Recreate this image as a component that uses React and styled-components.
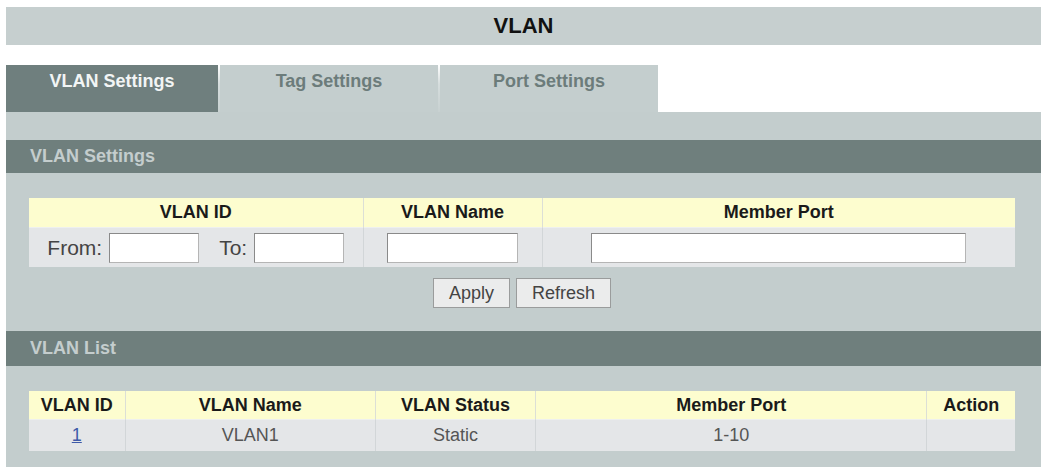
import React from "react";
import styled, { createGlobalStyle } from "styled-components";

const Global = createGlobalStyle`
  html, body { margin: 0; padding: 0; background: #ffffff; }
  body { font-family: "Liberation Sans", Arial, sans-serif; }
`;

const Page = styled.div`
  padding: 7px 5px 0 6px;
  width: 1046px;
  box-sizing: border-box;
`;

const TitleBar = styled.div`
  height: 38px;
  background: #c6cfcf;
  display: flex;
  align-items: center;
  justify-content: center;
  font-size: 22px;
  font-weight: bold;
  color: #111;
`;

const TabRow = styled.div`
  margin-top: 20px;
  display: flex;
  gap: 2px;
  height: 47px;
`;

const TabSlot = styled.div`
  display: flex;
  gap: 2px;
  background: linear-gradient(#ffffff, #d6dddd 40%, #c8d1d1);
`;

const Tab = styled.div`
  width: ${(p) => p.$w}px;
  background: ${(p) => (p.$active ? "#6f7f7e" : "#c4cece")};
  color: ${(p) => (p.$active ? "#f2f5f5" : "#6c7c7b")};
  font-size: 18px;
  font-weight: bold;
  text-align: center;
  padding-top: 6px;
  box-sizing: border-box;
  line-height: 20px;
`;

const Panel = styled.div`
  background: #c3cdcd;
  padding: 28px 0 20px;
`;

const SectionHeader = styled.div`
  height: ${(p) => p.$h}px;
  background: #6f7f7d;
  color: #c4cdcd;
  font-size: 18px;
  font-weight: bold;
  padding-left: 24px;
  display: flex;
  align-items: center;
`;

const TableWrap = styled.div`
  margin: 25px 26px 0 23px;
`;

const Table = styled.table`
  width: 100%;
  border-collapse: collapse;
  table-layout: fixed;
`;

const Th = styled.th`
  background: #fdfdcf;
  color: #1a1a1a;
  font-size: 18px;
  font-weight: bold;
  height: ${(p) => p.$h}px;
  padding: 0;
  text-align: center;
  border-left: 1px solid #dcdfd6;
  &:first-child { border-left: none; }
`;

const Td = styled.td`
  background: #e4e6e8;
  color: #555;
  font-size: 18px;
  height: ${(p) => p.$h}px;
  padding: 0;
  text-align: center;
  border-left: 1px solid #d2d6d8;
  border-top: 1px solid #eef0ef;
  &:first-child { border-left: none; }
`;

const FieldGroup = styled.div`
  display: flex;
  align-items: center;
  justify-content: center;
`;

const Label = styled.span`
  font-size: 21px;
  color: #444;
  margin-right: 7px;
  margin-left: ${(p) => p.$ml || 0}px;
`;

const Input = styled.input`
  width: ${(p) => p.$w}px;
  height: 30px;
  box-sizing: border-box;
  border: 1px solid #8a8a8a;
  border-right-color: #b5b5b5;
  border-bottom-color: #b5b5b5;
  background: #fff;
  margin: 0;
  padding: 0;
  display: block;
`;

const ButtonRow = styled.div`
  margin: 11px 26px 23px 23px;
  display: flex;
  justify-content: center;
  gap: 6px;
`;

const Button = styled.button`
  width: ${(p) => p.$w}px;
  height: 30px;
  font-family: "Liberation Sans", Arial, sans-serif;
  font-size: 18px;
  color: #444;
  background: #ebecec;
  border: 1px solid #9a9c9c;
  padding: 0;
`;

const Link = styled.a`
  color: #3d5aa8;
  text-decoration: underline;
`;

const Bottom = styled.div`
  height: 18px;
`;

export default function App() {
  return (
    <>
      <Global />
      <Page>
        <TitleBar>VLAN</TitleBar>
        <TabRow>
          <TabSlot>
            <Tab $w={212} $active>VLAN Settings</Tab>
            <Tab $w={218}>Tag Settings</Tab>
            <Tab $w={218}>Port Settings</Tab>
          </TabSlot>
        </TabRow>
        <Panel>
          <SectionHeader $h={33}>VLAN Settings</SectionHeader>
          <TableWrap>
            <Table>
              <colgroup>
                <col style={{ width: 334 }} />
                <col style={{ width: 179 }} />
                <col style={{ width: 473 }} />
              </colgroup>
              <thead>
                <tr>
                  <Th $h={29}>VLAN ID</Th>
                  <Th $h={29}>VLAN Name</Th>
                  <Th $h={29}>Member Port</Th>
                </tr>
              </thead>
              <tbody>
                <tr>
                  <Td $h={39}>
                    <FieldGroup>
                      <Label>From:</Label>
                      <Input $w={90} />
                      <Label $ml={20}>To:</Label>
                      <Input $w={90} />
                    </FieldGroup>
                  </Td>
                  <Td $h={39}>
                    <FieldGroup>
                      <Input $w={131} />
                    </FieldGroup>
                  </Td>
                  <Td $h={39}>
                    <FieldGroup>
                      <Input $w={375} />
                    </FieldGroup>
                  </Td>
                </tr>
              </tbody>
            </Table>
          </TableWrap>
          <ButtonRow>
            <Button $w={77}>Apply</Button>
            <Button $w={95}>Refresh</Button>
          </ButtonRow>
          <SectionHeader $h={35}>VLAN List</SectionHeader>
          <TableWrap>
            <Table>
              <colgroup>
                <col style={{ width: 96 }} />
                <col style={{ width: 250 }} />
                <col style={{ width: 160 }} />
                <col style={{ width: 391 }} />
                <col style={{ width: 88 }} />
              </colgroup>
              <thead>
                <tr>
                  <Th $h={28}>VLAN ID</Th>
                  <Th $h={28}>VLAN Name</Th>
                  <Th $h={28}>VLAN Status</Th>
                  <Th $h={28}>Member Port</Th>
                  <Th $h={28}>Action</Th>
                </tr>
              </thead>
              <tbody>
                <tr>
                  <Td $h={31}>
                    <Link href="#">1</Link>
                  </Td>
                  <Td $h={31}>VLAN1</Td>
                  <Td $h={31}>Static</Td>
                  <Td $h={31}>1-10</Td>
                  <Td $h={31}></Td>
                </tr>
              </tbody>
            </Table>
          </TableWrap>
          <Bottom />
        </Panel>
      </Page>
    </>
  );
}
